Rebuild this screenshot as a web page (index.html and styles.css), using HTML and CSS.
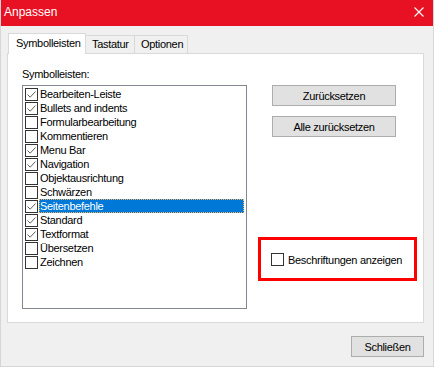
FILE: index.html
```html
<!DOCTYPE html>
<html lang="de">
<head>
  <meta charset="UTF-8">
  <title>Anpassen</title>
  <link rel="stylesheet" href="styles.css">
</head>
<body>
  <div class="window">
    <div class="titlebar">
      <span class="title">Anpassen</span>
      <svg class="close" width="10" height="10" viewBox="0 0 10 10">
        <path d="M0.5 0.5 L9.5 9.5 M9.5 0.5 L0.5 9.5" stroke="#fff" stroke-width="1.1" fill="none"/>
      </svg>
    </div>

    <div class="content">
      <div class="tabs">
        <div class="tab tab-active">Symbolleisten</div>
        <div class="tab">Tastatur</div>
        <div class="tab">Optionen</div>
      </div>

      <div class="panel">
        <div class="left-col">
          <div class="list-label">Symbolleisten:</div>
          <div class="listbox">
            <div class="item"><span class="box checked"></span><span class="item-text">Bearbeiten-Leiste</span></div>
            <div class="item"><span class="box checked"></span><span class="item-text">Bullets and indents</span></div>
            <div class="item"><span class="box"></span><span class="item-text">Formularbearbeitung</span></div>
            <div class="item"><span class="box"></span><span class="item-text">Kommentieren</span></div>
            <div class="item"><span class="box checked"></span><span class="item-text">Menu Bar</span></div>
            <div class="item"><span class="box checked"></span><span class="item-text">Navigation</span></div>
            <div class="item"><span class="box"></span><span class="item-text">Objektausrichtung</span></div>
            <div class="item"><span class="box"></span><span class="item-text">Schwärzen</span></div>
            <div class="item item-selected"><span class="box checked"></span><span class="item-text">Seitenbefehle</span></div>
            <div class="item"><span class="box checked"></span><span class="item-text">Standard</span></div>
            <div class="item"><span class="box checked"></span><span class="item-text">Textformat</span></div>
            <div class="item"><span class="box"></span><span class="item-text">Übersetzen</span></div>
            <div class="item"><span class="box"></span><span class="item-text">Zeichnen</span></div>
          </div>
        </div>

        <div class="right-col">
          <button class="btn btn-wide">Zurücksetzen</button>
          <button class="btn btn-wide">Alle zurücksetzen</button>
          <div class="highlight">
            <label class="caption-option"><span class="box"></span>Beschriftungen anzeigen</label>
          </div>
        </div>
      </div>

      <div class="footer">
        <button class="btn btn-close">Schließen</button>
      </div>
    </div>
  </div>
</body>
</html>
```

FILE: styles.css
```css
body {
  margin: 0;
  font-family: "Liberation Sans", Arial, sans-serif;
  font-size: 11px;
  letter-spacing: -0.3px;
  color: #000;
  background: #f0f0f0;
}

.window {
  width: 434px;
  height: 367px;
  box-sizing: border-box;
  background: #f0f0f0;
  border: 1px solid #d6d6d6;
  border-top: none;
  overflow: hidden;
}

.titlebar {
  height: 26px;
  box-sizing: border-box;
  margin: 0 -1px;
  background: #e81123;
  display: flex;
  align-items: center;
  justify-content: space-between;
  padding: 0 10px 2px 4px;
}

.title {
  color: #fff;
  font-size: 12px;
  letter-spacing: 0;
}

.close {
  display: block;
}

.content {
  padding: 7px 9px 0 6px;
}

/* Tabs */
.tabs {
  display: flex;
  align-items: flex-end;
  height: 20px;
  padding-left: 1px;
  position: relative;
  z-index: 1;
}

.tab {
  height: 18px;
  box-sizing: border-box;
  border: 1px solid #d9d9d9;
  border-bottom: none;
  border-left: none;
  padding: 0 6px;
  line-height: 17px;
  background: #f0f0f0;
}

.tab-active {
  height: 21px;
  margin-bottom: -1px;
  width: 78px;
  border-left: 1px solid #d9d9d9;
  background: #fff;
  padding: 0 0 0 7px;
  line-height: 19px;
}

.tab:nth-child(2) {
  width: 49px;
}

.tab:nth-child(3) {
  width: 53px;
}

/* Panel */
.panel {
  height: 270px;
  box-sizing: border-box;
  background: #fff;
  border: 1px solid #d9d9d9;
  display: grid;
  grid-template-columns: 225px 1fr;
  padding: 13px 0 0 14px;
}

.list-label {
  height: 14px;
  line-height: 14px;
  margin-bottom: 4px;
}

.listbox {
  height: 224px;
  box-sizing: border-box;
  border: 1px solid #828790;
  padding: 1px 1px 0 2px;
}

.item {
  height: 14px;
  display: flex;
  align-items: center;
}

.box {
  width: 13px;
  height: 13px;
  box-sizing: border-box;
  border: 1px solid #333;
  background: #fff;
  flex-shrink: 0;
  margin-right: 2px;
}

.box.checked {
  background: #fff url("data:image/svg+xml,%3Csvg xmlns='http://www.w3.org/2000/svg' width='11' height='11'%3E%3Cpath d='M1.5 5.5 L4.2 8.2 L9.5 2.5' stroke='%23606060' stroke-width='1' fill='none'/%3E%3C/svg%3E") no-repeat center;
}

.item-text {
  line-height: 14px;
}

.item-selected .box {
  margin-right: 1px;
}

.item-selected .item-text {
  flex: 1;
  height: 14px;
  box-sizing: border-box;
  margin-right: 1px;
  padding-left: 0;
  background: #0078d7;
  color: #fff;
  border: 1px dotted #f2b35a;
  line-height: 12px;
}

.right-col {
  display: flex;
  flex-direction: column;
  align-items: flex-start;
  padding-left: 11px;
  padding-top: 18px;
}

.btn {
  font-family: "Liberation Sans", Arial, sans-serif;
  font-size: 11px;
  letter-spacing: -0.3px;
  background: #e1e1e1;
  border: 1px solid #adadad;
  color: #000;
  padding: 0;
  border-radius: 0;
}

.btn-wide {
  width: 124px;
  height: 21px;
  margin-left: 14px;
  margin-bottom: 10px;
}

.highlight {
  margin-top: 90px;
  width: 159px;
  height: 44px;
  box-sizing: border-box;
  border: 3px solid #ff0000;
  padding: 13px 0 0 10px;
}

.caption-option {
  display: flex;
  align-items: center;
  height: 13px;
}

.caption-option .box {
  margin-right: 4px;
}

.footer {
  display: flex;
  justify-content: flex-end;
  padding-top: 13px;
}

.btn-close {
  width: 73px;
  height: 21px;
}
```
